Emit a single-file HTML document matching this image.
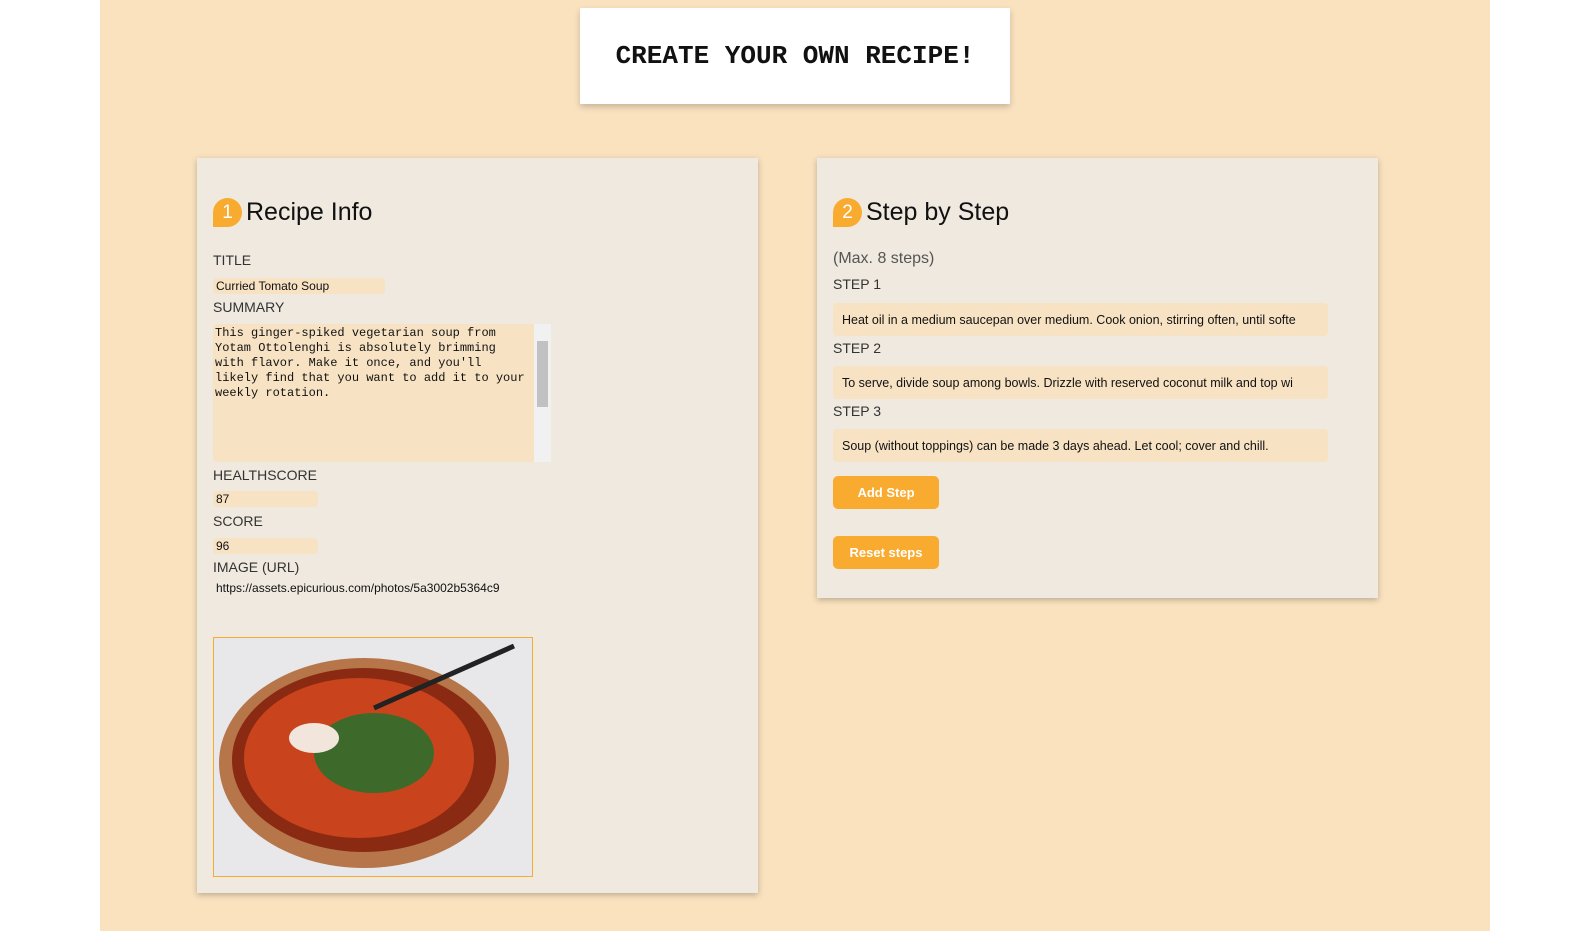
<!DOCTYPE html>
<html><head><style>
*{box-sizing:border-box;margin:0;padding:0}
body{width:1576px;height:931px;background:#fff;font-family:"Liberation Sans",sans-serif;position:relative;overflow:hidden}
.bg{position:absolute;left:100px;top:0;width:1390px;height:931px;background:#fae2bf}
.hdr{position:absolute;left:580px;top:8px;width:430px;height:96px;background:#fff;box-shadow:0 3px 6px rgba(0,0,0,.2);display:flex;align-items:center;justify-content:center;font-family:"Liberation Mono",monospace;font-size:26px;font-weight:bold;color:#111}
.panel{position:absolute;background:#efe9df;box-shadow:0 2px 6px rgba(0,0,0,.25)}
.h{position:absolute;display:flex;align-items:center;font-size:25px;color:#111}
.badge{width:29px;height:29px;background:#f9ab30;border-radius:15px 15px 15px 0;color:#fff;font-size:19px;display:flex;align-items:center;justify-content:center;margin-right:4px}
.lbl{position:absolute;font-size:14px;color:#333}
.inp{position:absolute;background:#f7e3c4;border-radius:4px;font-size:12px;color:#111;padding-left:3px;display:flex;align-items:center;white-space:nowrap;overflow:hidden}
.btn{position:absolute;left:16px;width:106px;height:33px;background:#f9ab30;border-radius:5px;color:#fff;font-size:13px;font-weight:bold;display:flex;align-items:center;justify-content:center}
</style></head><body>
<div class="bg"></div>
<div class="hdr">CREATE YOUR OWN RECIPE!</div>

<div class="panel" style="left:197px;top:158px;width:561px;height:735px">
<div class="h" style="left:16px;top:40px"><div class="badge">1</div>Recipe Info</div>
<div class="lbl" style="left:16px;top:94px">TITLE</div>
<div class="inp" style="left:16px;top:120px;width:172px;height:16px">Curried Tomato Soup</div>
<div class="lbl" style="left:16px;top:141px">SUMMARY</div>
<div style="position:absolute;left:16px;top:166px;width:338px;height:138px;background:#f7e3c4;border-radius:4px 0 0 4px;font-family:'Liberation Mono',monospace;font-size:12px;line-height:15px;padding:2px 20px 2px 2px;color:#111">This ginger-spiked vegetarian soup from Yotam Ottolenghi is absolutely brimming with flavor. Make it once, and you'll likely find that you want to add it to your weekly rotation.
<div style="position:absolute;right:0;top:0;width:17px;height:138px;background:#f1f1f1"><div style="position:absolute;left:3px;top:17px;width:11px;height:66px;background:#c1c1c1"></div></div></div>
<div class="lbl" style="left:16px;top:309px">HEALTHSCORE</div>
<div class="inp" style="left:16px;top:333px;width:105px;height:16px">87</div>
<div class="lbl" style="left:16px;top:355px">SCORE</div>
<div class="inp" style="left:16px;top:380px;width:105px;height:16px">96</div>
<div class="lbl" style="left:16px;top:401px">IMAGE (URL)</div>
<div class="inp" style="left:16px;top:422px;width:316px;height:16px;background:none">https://assets.epicurious.com/photos/5a3002b5364c9</div>
<div style="position:absolute;left:16px;top:479px;width:320px;height:240px;border:1px solid #f9ab30;background:#e8e8ea;overflow:hidden">
<svg width="320" height="240"><ellipse cx="150" cy="125" rx="145" ry="105" fill="#b7754a"/><ellipse cx="150" cy="122" rx="132" ry="92" fill="#8a2a12"/><ellipse cx="145" cy="120" rx="115" ry="80" fill="#c9441c"/><ellipse cx="160" cy="115" rx="60" ry="40" fill="#3d6a2a"/><ellipse cx="100" cy="100" rx="25" ry="15" fill="#f2e6dc"/><line x1="160" y1="70" x2="300" y2="8" stroke="#222" stroke-width="5"/></svg></div>
</div>

<div class="panel" style="left:817px;top:158px;width:561px;height:440px">
<div class="h" style="left:16px;top:40px"><div class="badge">2</div>Step by Step</div>
<div class="lbl" style="left:16px;top:92px;font-size:16px;color:#555">(Max. 8 steps)</div>
<div class="lbl" style="left:16px;top:118px">STEP 1</div>
<div class="inp" style="left:16px;top:145px;width:495px;height:33px;padding-left:9px;font-size:12.5px">Heat oil in a medium saucepan over medium. Cook onion, stirring often, until softe</div>
<div class="lbl" style="left:16px;top:182px">STEP 2</div>
<div class="inp" style="left:16px;top:208px;width:495px;height:33px;padding-left:9px;font-size:12.5px">To serve, divide soup among bowls. Drizzle with reserved coconut milk and top wi</div>
<div class="lbl" style="left:16px;top:245px">STEP 3</div>
<div class="inp" style="left:16px;top:271px;width:495px;height:33px;padding-left:9px;font-size:12.5px">Soup (without toppings) can be made 3 days ahead. Let cool; cover and chill.</div>
<div class="btn" style="top:318px">Add Step</div>
<div class="btn" style="top:378px">Reset steps</div>
</div>
</body></html>
